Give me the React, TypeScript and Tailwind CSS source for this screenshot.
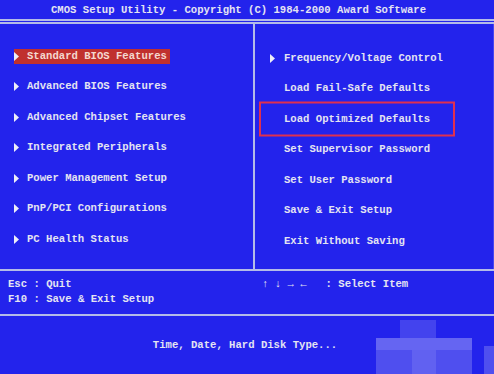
import React from "react";

const leftItems = [
  "Standard BIOS Features",
  "Advanced BIOS Features",
  "Advanced Chipset Features",
  "Integrated Peripherals",
  "Power Management Setup",
  "PnP/PCI Configurations",
  "PC Health Status",
];

const rightItems = [
  { label: "Frequency/Voltage Control", arrow: true },
  { label: "Load Fail-Safe Defaults", arrow: false },
  { label: "Load Optimized Defaults", arrow: false, boxed: true },
  { label: "Set Supervisor Password", arrow: false },
  { label: "Set User Password", arrow: false },
  { label: "Save & Exit Setup", arrow: false },
  { label: "Exit Without Saving", arrow: false },
];

function Arrow() {
  return (
    <svg width="5" height="9" viewBox="0 0 5 9" className="block">
      <path d="M0 0 L5 4.5 L0 9 Z" fill="#eeeef8" />
    </svg>
  );
}

export default function App() {
  return (
    <div
      className="relative w-[494px] h-[374px] overflow-hidden bg-[#2323ec] text-[#e4e4f2] text-[10.6px] font-bold leading-[15px]"
      style={{ fontFamily: '"Liberation Mono", "DejaVu Sans Mono", monospace' }}
    >
      {/* title */}
      <div className="h-[19px] pt-[3px] pl-[51px] whitespace-pre">
        CMOS Setup Utility - Copyright (C) 1984-2000 Award Software
      </div>
      <div className="h-[5px] border-y-2 border-[#b4bbe8]" />

      {/* menus */}
      <div className="flex h-[245px]">
        <div className="w-[253px] pt-[17px]">
          {leftItems.map((label, i) => (
            <div key={label} className="h-[30.5px] flex items-center pl-[14px]">
              {i === 0 ? (
                <div className="flex items-center h-[15px] bg-[#c0302e] pr-[3px] text-[#f4d8d0]">
                  <span className="w-[13px]">
                    <Arrow />
                  </span>
                  <span className="whitespace-pre">{label}</span>
                </div>
              ) : (
                <div className="flex items-center">
                  <span className="w-[13px]">
                    <Arrow />
                  </span>
                  <span className="whitespace-pre">{label}</span>
                </div>
              )}
            </div>
          ))}
        </div>
        <div className="w-[2px] bg-[#b4bbe8]" />
        <div className="flex-1 pt-[19px] border-r border-[#4747f0]">
          {rightItems.map((item) => (
            <div
              key={item.label}
              className="relative h-[30.5px] flex items-center pl-[15px]"
            >
              <span className="w-[14px]">{item.arrow && <Arrow />}</span>
              <span className="whitespace-pre">{item.label}</span>
              {item.boxed && (
                <div className="absolute left-[4px] top-1/2 -translate-y-1/2 w-[196px] h-[35px] border-2 border-[#e0304e]" />
              )}
            </div>
          ))}
        </div>
      </div>

      {/* key help */}
      <div className="h-[2px] bg-[#b4bbe8]" />
      <div className="flex h-[43px] pt-[6px] whitespace-pre">
        <div className="w-[262px] pl-[8px]">
          <div>Esc : Quit</div>
          <div>F10 : Save &amp; Exit Setup</div>
        </div>
        <div>↑ ↓ → ←   : Select Item</div>
      </div>
      <div className="h-[2px] bg-[#b4bbe8]" />

      {/* status line */}
      <div className="h-[58px] flex items-center justify-center pr-[4px] whitespace-pre">
        Time, Date, Hard Disk Type...
      </div>

      {/* watermark blocks */}
      <div className="absolute left-[400px] top-[320px] w-[36px] h-[18px] bg-white/15" />
      <div className="absolute left-[376px] top-[338px] w-[96px] h-[12px] bg-white/30" />
      <div className="absolute left-[376px] top-[350px] w-[96px] h-[24px] bg-white/20" />
      <div className="absolute left-[412px] top-[350px] w-[24px] h-[24px] bg-white/10" />
      <div className="absolute left-[484px] top-[346px] w-[10px] h-[28px] bg-white/20" />
    </div>
  );
}
